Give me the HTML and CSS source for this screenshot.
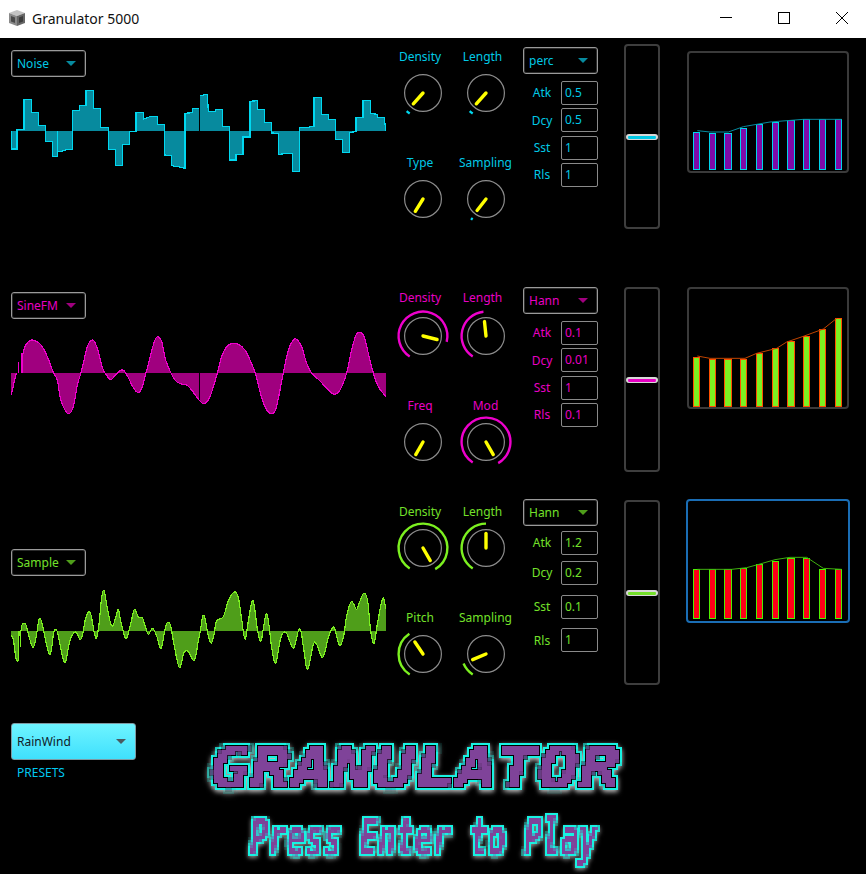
FILE: index.html
```html
<!DOCTYPE html>
<html lang="en">
<head>
    <meta charset="UTF-8">
    <title>Granulator 5000</title>
    <link rel="stylesheet" href="styles.css">
</head>
<body>
    <div class="titlebar">
        <svg class="app-icon" width="18" height="18" viewBox="0 0 18 18">
            <polygon points="9,1 17,4 9,7 1,4" fill="#c4c4c4"/>
            <polygon points="1,4 9,7 9,17 1,14" fill="#8a8a8a"/>
            <polygon points="17,4 9,7 9,17 17,14" fill="#666"/>
            <polygon points="3,7 7,8.5 7,14 3,12.5" fill="#4a4a4a"/>
            <polygon points="15,7 11,8.5 11,14 15,12.5" fill="#3c3c3c"/>
        </svg>
        <span class="app-title">Granulator 5000</span>
        <div class="win-controls">
            <div class="win-btn"><svg width="14" height="14" viewBox="0 0 14 14"><path d="M1 6.5H13" stroke="#000" fill="none"/></svg></div>
            <div class="win-btn"><svg width="14" height="14" viewBox="0 0 14 14"><rect x="1.5" y="1.5" width="11" height="11" stroke="#000" fill="none"/></svg></div>
            <div class="win-btn"><svg width="14" height="14" viewBox="0 0 14 14"><path d="M1 1L13 13M13 1L1 13" stroke="#000" fill="none"/></svg></div>
        </div>
    </div>

    <!-- noise voice -->
    <div class="synth synth-noise">
        <div class="osc">
            <div class="dropdown"><span>Noise</span><i class="arrow"></i></div>
            <svg class="wave" data-wave="noise" viewBox="33 255 1125 270"></svg>
        </div>
        <div class="knobs">
            <div class="knob-cell"><div class="knob-label">Density</div><svg class="knob" data-angle="-138" data-arc="1"></svg></div>
            <div class="knob-cell"><div class="knob-label">Length</div><svg class="knob" data-angle="-138" data-arc="1"></svg></div>
            <div class="knob-cell"><div class="knob-label">Type</div><svg class="knob" data-angle="-148"></svg></div>
            <div class="knob-cell"><div class="knob-label">Sampling</div><svg class="knob" data-angle="-142" data-arc="1"></svg></div>
        </div>
        <div class="env">
            <div class="dropdown"><span>perc</span><i class="arrow"></i></div>
            <div class="env-row"><label>Atk</label><div class="field">0.5</div></div>
            <div class="env-row"><label>Dcy</label><div class="field">0.5</div></div>
            <div class="env-row"><label>Sst</label><div class="field">1</div></div>
            <div class="env-row"><label>Rls</label><div class="field">1</div></div>
        </div>
        <div class="fader"><div class="fader-thumb"></div></div>
        <div class="graph"><svg data-graph="noise" viewBox="237 159 474 354"></svg></div>
    </div>

    <!-- sine fm voice -->
    <div class="synth synth-fm">
        <div class="osc">
            <div class="dropdown"><span>SineFM</span><i class="arrow"></i></div>
            <svg class="wave" data-wave="fm" viewBox="33 126 1125 270"></svg>
        </div>
        <div class="knobs">
            <div class="knob-cell"><div class="knob-label">Density</div><svg class="knob" data-angle="104" data-arc="1"></svg></div>
            <div class="knob-cell"><div class="knob-label">Length</div><svg class="knob" data-angle="-6" data-arc="1"></svg></div>
            <div class="knob-cell"><div class="knob-label">Freq</div><svg class="knob" data-angle="-150"></svg></div>
            <div class="knob-cell"><div class="knob-label">Mod</div><svg class="knob" data-angle="150" data-arc="1"></svg></div>
        </div>
        <div class="env">
            <div class="dropdown"><span>Hann</span><i class="arrow"></i></div>
            <div class="env-row"><label>Atk</label><div class="field">0.1</div></div>
            <div class="env-row"><label>Dcy</label><div class="field">0.01</div></div>
            <div class="env-row"><label>Sst</label><div class="field">1</div></div>
            <div class="env-row"><label>Rls</label><div class="field">0.1</div></div>
        </div>
        <div class="fader"><div class="fader-thumb"></div></div>
        <div class="graph"><svg data-graph="fm" viewBox="237 27 474 354"></svg></div>
    </div>

    <!-- sample voice -->
    <div class="synth synth-sample">
        <div class="osc">
            <div class="dropdown"><span>Sample</span><i class="arrow"></i></div>
            <svg class="wave" data-wave="sample" viewBox="33 129 1125 270"></svg>
        </div>
        <div class="knobs">
            <div class="knob-cell"><div class="knob-label">Density</div><svg class="knob" data-angle="150" data-arc="1"></svg></div>
            <div class="knob-cell"><div class="knob-label">Length</div><svg class="knob" data-angle="0" data-arc="1"></svg></div>
            <div class="knob-cell"><div class="knob-label">Pitch</div><svg class="knob" data-angle="-34" data-arc="1"></svg></div>
            <div class="knob-cell"><div class="knob-label">Sampling</div><svg class="knob" data-angle="-113" data-arc="1"></svg></div>
        </div>
        <div class="env">
            <div class="dropdown"><span>Hann</span><i class="arrow"></i></div>
            <div class="env-row"><label>Atk</label><div class="field">1.2</div></div>
            <div class="env-row"><label>Dcy</label><div class="field">0.2</div></div>
            <div class="env-row"><label>Sst</label><div class="field">0.1</div></div>
            <div class="env-row"><label>Rls</label><div class="field">1</div></div>
        </div>
        <div class="fader"><div class="fader-thumb"></div></div>
        <div class="graph graph-active"><svg data-graph="sample" viewBox="234 33 480 360"></svg></div>
    </div>

    <div class="footer">
        <div class="presets">
            <div class="preset-box"><span>RainWind</span><i class="arrow"></i></div>
            <div class="preset-label">PRESETS</div>
        </div>
        <svg class="logo" width="450" height="144" viewBox="0 0 450 144">
            <defs>
                <!-- the logo letters are sampled on a grid so they come out blocky -->
                <filter id="pixelBig" color-interpolation-filters="sRGB" filterUnits="userSpaceOnUse" x="0" y="0" width="450" height="80">
                    <feFlood x="2" y="2" width="1" height="1"/>
                    <feComposite width="4" height="4"/>
                    <feTile result="grid"/>
                    <feComposite in="SourceAlpha" in2="grid" operator="in"/>
                    <feMorphology operator="dilate" radius="2" result="px"/>
                    <feFlood flood-color="#7f4399"/>
                    <feComposite in2="px" operator="in" result="body"/>
                    <feMorphology in="px" operator="dilate" radius="1" result="gap"/>
                    <feMorphology in="px" operator="dilate" radius="3" result="edge"/>
                    <feFlood flood-color="#18f2e2"/>
                    <feComposite in2="edge" operator="in" result="cyan"/>
                    <feGaussianBlur in="edge" stdDeviation="2.6"/>
                    <feOffset dy="2" result="blur"/>
                    <feFlood flood-color="#c4c4c4"/>
                    <feComposite in2="blur" operator="in" result="halo"/>
                    <feMerge>
                        <feMergeNode in="halo"/>
                        <feMergeNode in="cyan"/>
                        <feMergeNode in="gap"/>
                        <feMergeNode in="body"/>
                    </feMerge>
                </filter>
                <filter id="pixelSmall" color-interpolation-filters="sRGB" filterUnits="userSpaceOnUse" x="0" y="70" width="450" height="74">
                    <feFlood x="1" y="71" width="1" height="1"/>
                    <feComposite y="70" width="3" height="3"/>
                    <feTile result="grid"/>
                    <feComposite in="SourceAlpha" in2="grid" operator="in"/>
                    <feMorphology operator="dilate" radius="1" result="px"/>
                    <feFlood flood-color="#7f4399"/>
                    <feComposite in2="px" operator="in" result="body"/>
                    <feMorphology in="px" operator="dilate" radius="2" result="edge"/>
                    <feFlood flood-color="#18f2e2"/>
                    <feComposite in2="edge" operator="in" result="cyan"/>
                    <feGaussianBlur in="edge" stdDeviation="2"/>
                    <feOffset dy="2" result="blur"/>
                    <feFlood flood-color="#8c8c8c"/>
                    <feComposite in2="blur" operator="in" result="halo"/>
                    <feMerge>
                        <feMergeNode in="halo"/>
                        <feMergeNode in="cyan"/>
                        <feMergeNode in="body"/>
                    </feMerge>
                </filter>
            </defs>
            <g filter="url(#pixelBig)">
                <text class="logo-big" transform="translate(19 58) scale(1.22 1)">GRANULATOR</text>
            </g>
            <g filter="url(#pixelSmall)">
                <text class="logo-small" transform="translate(60 125) scale(0.595 1)">Press Enter to Play</text>
            </g>
        </svg>
    </div>

    <script src="script.js"></script>
</body>
</html>
```

FILE: styles.css
```css
* {
    box-sizing: border-box;
}

html, body {
    margin: 0;
    padding: 0;
    height: 874px;
    overflow: hidden;
    background-color: #000;
    font-family: "Noto Sans", Arial, sans-serif;
    font-size: 12px;
}

.titlebar {
    display: flex;
    align-items: center;
    height: 38px;
    padding-left: 8px;
    padding-bottom: 2px;
    background-color: #fff;
}

.app-icon {
    margin-right: 6px;
}

.app-title {
    color: #111;
    font-size: 14px;
}

.win-controls {
    display: flex;
    gap: 12px;
    margin-left: auto;
    padding-right: 1px;
}

.win-btn {
    display: flex;
    align-items: center;
    justify-content: center;
    width: 46px;
    height: 36px;
}

/* one voice: oscillator, knobs, envelope, fader, graph */
.synth {
    display: grid;
    grid-template-columns: 379px 133px 101px 62px 164px;
    padding-left: 11px;
    color: var(--accent);
}

.synth-noise {
    --accent: #00c9e6;
    --dim: #078a9e;
    --line: #00d8f0;
    height: 243px;
}

.synth-fm {
    --accent: #e800c4;
    --dim: #a0007f;
    --line: #ee00cc;
    height: 213px;
}

.synth-sample {
    --accent: #74e02a;
    --dim: #4f9e1a;
    --line: #7cf020;
    height: 221px;
}

.osc {
    padding-top: 12px;
}

.synth-fm .osc {
    padding-top: 11px;
}

.synth-sample .osc {
    padding-top: 55px;
}

.dropdown {
    display: flex;
    align-items: center;
    justify-content: space-between;
    width: 75px;
    height: 27px;
    padding: 0 9px 0 5px;
    border: 1px solid #9a9a9a;
    border-radius: 3px;
    box-shadow: inset 0 0 0 1px #2c2c2c;
    color: var(--accent);
}

.arrow {
    width: 0;
    height: 0;
    border-left: 5px solid transparent;
    border-right: 5px solid transparent;
    border-top: 5px solid var(--dim);
}

.wave {
    display: block;
    width: 375px;
    height: 90px;
    margin-top: 8px;
}

.wave path {
    shape-rendering: crispEdges;
}

.knobs {
    display: grid;
    grid-template-columns: 66px 59px;
    align-content: start;
    row-gap: 32px;
    padding-top: 11px;
}

.synth-fm .knobs {
    padding-top: 9px;
}

.synth-sample .knobs {
    padding-top: 10px;
}

.knob-cell {
    display: flex;
    flex-direction: column;
    align-items: center;
}

.knob-label {
    height: 16px;
    line-height: 16px;
    white-space: nowrap;
}

.knob-cell:nth-child(odd) .knob-label,
.knob-cell:nth-child(2) .knob-label {
    margin-right: 6px;
}

.knob {
    display: block;
    flex: none;
    width: 60px;
    height: 60px;
    margin-top: -2px;
}

.synth-fm .knob-cell:nth-child(-n+2) .knob {
    margin-top: 0;
}

.env {
    display: flex;
    flex-direction: column;
    gap: 3.3px;
    padding-top: 9px;
}

.synth-fm .env {
    padding-top: 6px;
}

.synth-sample .env {
    padding-top: 5px;
}

.env .dropdown {
    margin-bottom: 3.7px;
}

.env-row {
    display: flex;
    align-items: center;
    width: 75px;
    height: 24px;
}

.env-row label {
    width: 38px;
    text-align: center;
}

.field {
    width: 37px;
    height: 24px;
    padding-left: 3px;
    line-height: 22px;
    border: 1px solid #8a8a8a;
    border-radius: 2px;
}

/* the sample voice has uneven spacing in its envelope column */
.synth-sample .env .dropdown {
    margin-bottom: 1.7px;
}

.synth-sample .env-row:nth-child(3) {
    margin-top: 2.7px;
}

.synth-sample .env-row:nth-child(4) {
    margin-top: 6.7px;
}

.synth-sample .env-row:nth-child(5) {
    margin-top: 6px;
}

.fader {
    width: 36px;
    height: 185px;
    margin-top: 6px;
    border: 2px solid #3e3e3e;
    border-radius: 4px;
}

.fader-thumb {
    height: 6px;
    margin-top: 88px;
    background-color: var(--accent);
    border: 2px solid #d8d8d8;
    border-bottom-width: 1px;
    border-radius: 3px;
}

.graph {
    width: 162px;
    height: 122px;
    margin-left: 1px;
    border: 2px solid #3a3a3a;
    border-radius: 4px;
}

.graph svg {
    display: block;
    width: 100%;
    height: 100%;
}

.graph rect {
    shape-rendering: crispEdges;
}

.synth-noise .graph {
    margin-top: 13px;
}

.synth-fm .graph {
    margin-top: 6px;
}

.graph-active {
    width: 164px;
    height: 124px;
    margin-top: 5px;
    margin-left: 0;
    border-color: #1a6db4;
}

.footer {
    display: flex;
    height: 159px;
    padding-left: 11px;
    --dim: #4a5a60;
}

.presets {
    width: 125px;
    padding-top: 8px;
}

.preset-box {
    display: flex;
    align-items: center;
    justify-content: space-between;
    height: 37px;
    padding: 0 9px 0 5px;
    border: 1px solid #7d9aa3;
    border-radius: 3px;
    background: linear-gradient(#6ef4ff, #3fe0fd);
    color: #102028;
}

.preset-label {
    margin-top: 4px;
    padding-left: 6px;
    color: #00c8f0;
}

.logo {
    display: block;
    margin-top: 15px;
    margin-left: 54px;
}

.logo text {
    font-family: "DejaVu Sans Mono", monospace;
    font-weight: bold;
    font-style: oblique;
}

.logo-big {
    font-size: 56px;
}

.logo-small {
    font-size: 51px;
}
```

FILE: script.js
```js
// all coordinates below are in 1/3 px units, same as the svg viewBoxes
var NS = "http://www.w3.org/2000/svg";

var WAVES = {
    noise: {
        base: 392,
        smooth: false,
        parts: [[[33,392],[33,447],[51,447],[51,392]],
            [[51,392],[51,388],[72,388],[72,298],[95,298],[95,337],[116,337],[116,376],[136,376],[136,424],[157,424],[157,468],[172,470],[172,455],[195,452],[197,448],[217,448],[217,332],[238,332],[238,316],[258,316],[258,271],[281,271],[281,325],[302,325],[302,382],[325,382],[325,449],[347,449],[347,497],[367,497],[367,434],[388,434],[388,396],[408,394],[408,337],[431,337],[431,357],[450,350],[472,350],[472,374],[493,374],[493,465],[514,467],[514,497],[535,500],[555,505],[555,340],[577,338],[577,325],[597,325]],
            [[601,287],[622,283],[625,335],[646,335],[646,328],[667,328],[667,380],[688,380],[688,480],[708,480],[708,464],[729,464],[729,411],[750,411],[750,304],[772,302],[772,328],[793,328],[793,367],[814,367],[814,399],[835,400],[835,463],[856,461],[877,461],[877,514],[898,514],[898,383],[921,382],[942,379],[942,292],[964,292],[964,343],[985,343],[985,358],[1006,358],[1006,418],[1027,418],[1027,458],[1048,458],[1048,397],[1068,395],[1068,352],[1089,352],[1089,301],[1111,301],[1111,340],[1132,343],[1132,352],[1153,352],[1153,372],[1158,372],[1158,392]]],
        marks: [[172, 392, 470]],
        cuts: []
    },
    fm: {
        base: 264,
        smooth: true,
        parts: [[[33,330],[38,312],[44,285],[49,264]],
            [[68,264],[68,212],[75,185],[85,170],[95,165],[105,167],[118,175],[130,190],[145,222],[160,262],[172,285],[180,335],[190,365],[205,386],[220,365],[232,300],[243,264],[250,235],[262,185],[272,168],[282,168],[295,200],[308,250],[318,268],[332,284],[345,272],[360,257],[372,257],[385,278],[400,308],[414,323],[425,310],[438,264],[452,210],[463,170],[473,155],[485,170],[497,225],[512,262],[525,285],[540,296],[560,300],[575,315],[597,345],[612,356],[630,335],[652,264],[665,215],[680,185],[695,176],[715,178],[735,195],[750,225],[765,262],[780,320],[795,365],[812,386],[828,370],[850,264],[865,195],[880,165],[890,163],[905,185],[920,235],[935,264],[960,288],[985,315],[1003,328],[1020,315],[1040,264],[1055,195],[1068,150],[1080,142],[1092,155],[1105,205],[1120,264],[1135,305],[1158,335]]],
        marks: [[54, 232, 264], [63, 203, 264]],
        cuts: [[598, 264, 345]]
    },
    sample: {
        base: 270,
        smooth: true,
        parts: [[[33,282],[40,295],[48,352],[55,352],[57,270]],
            [[63,270],[65,255],[70,247],[78,252],[88,290],[99,320],[108,290],[115,245],[120,232],[127,250],[135,290],[148,340],[155,320],[162,272],[172,272],[185,335],[196,365],[207,310],[215,285],[228,273],[240,295],[248,280],[255,240],[265,213],[273,222],[282,270],[289,292],[297,250],[305,170],[312,148],[320,190],[330,240],[338,255],[347,230],[355,205],[362,240],[372,280],[380,292],[392,250],[403,205],[415,228],[427,230],[437,260],[445,280],[458,262],[470,285],[483,323],[495,265],[503,244],[512,255],[522,310],[538,380],[552,335],[565,332],[583,358],[595,300],[601,270],[608,226],[615,232],[625,285],[634,307],[642,280],[650,240],[670,227],[685,180],[703,153],[715,170],[725,235],[735,295],[745,240],[757,178],[765,210],[773,270],[783,300],[792,250],[800,217],[808,260],[815,320],[827,367],[840,300],[848,277],[860,277],[880,322],[895,270],[903,270],[912,330],[923,385],[940,310],[950,310],[968,349],[985,290],[997,260],[1005,265],[1018,312],[1030,290],[1040,225],[1052,185],[1060,187],[1070,205],[1080,180],[1092,157],[1103,180],[1112,270],[1122,307],[1132,250],[1148,172],[1158,205]]],
        marks: [[61, 270, 318]],
        cuts: []
    }
};

var BAR_X = [[250,269],[298,317],[343,365],[391,410],[439,458],[487,506],[532,554],[580,599],[628,647],[676,695]];

var GRAPHS = {
    noise: {
        bottom: 509, fill: "#7f0aa8", edge: "#00d4ec", line: "#078a9e",
        tops: [397,400,400,385,373,367,361,358,358,358],
        env: "262,392 300,396 355,396 400,380 480,366 580,358 695,358"
    },
    fm: {
        bottom: 380, fill: "#7cf020", edge: "#ff5000", line: "#c04400",
        tops: [232,236,236,236,220,205,184,169,148,115],
        env: "262,228 300,235 405,235 440,220 500,205 530,186 580,169 640,147 680,115"
    },
    sample: {
        bottom: 386, fill: "#ff0018", edge: "#4ef000", line: "#3fae10",
        tops: [238,238,238,235,223,214,205,205,238,238],
        env: "262,238 365,238 410,233 450,222 495,209 540,202 590,202 640,235 695,238"
    }
};

function el(parent, name, attrs) {
    var node = document.createElementNS(NS, name);
    for (var key in attrs) {
        node.setAttribute(key, attrs[key]);
    }
    parent.appendChild(node);
    return node;
}

// catmull-rom through the points
function curve(points, smooth) {
    var d = "M" + points[0][0] + " " + points[0][1];
    for (var i = 0; i < points.length - 1; i++) {
        var p1 = points[i];
        var p2 = points[i + 1];
        if (!smooth) {
            d += "L" + p2[0] + " " + p2[1];
            continue;
        }
        var p0 = points[i - 1] || p1;
        var p3 = points[i + 2] || p2;
        d += "C" + (p1[0] + (p2[0] - p0[0]) / 6) + " " + (p1[1] + (p2[1] - p0[1]) / 6) +
             " " + (p2[0] - (p3[0] - p1[0]) / 6) + " " + (p2[1] - (p3[1] - p1[1]) / 6) +
             " " + p2[0] + " " + p2[1];
    }
    return d;
}

document.querySelectorAll("[data-wave]").forEach(function(svg) {
    var wave = WAVES[svg.dataset.wave];
    var style = getComputedStyle(svg);
    var dim = style.getPropertyValue("--dim");
    var line = style.getPropertyValue("--line");

    wave.parts.forEach(function(points) {
        var d = curve(points, wave.smooth);
        var first = points[0];
        var last = points[points.length - 1];
        var closed = d + "L" + last[0] + " " + wave.base + "L" + first[0] + " " + wave.base + "Z";
        el(svg, "path", { d: closed, fill: dim });
        el(svg, "path", { d: d, fill: "none", stroke: line, "stroke-width": 3.6 });
    });
    wave.marks.forEach(function(m) {
        el(svg, "path", { d: "M" + m[0] + " " + m[1] + "V" + m[2], stroke: line, "stroke-width": 3 });
    });
    wave.cuts.forEach(function(m) {
        el(svg, "path", { d: "M" + m[0] + " " + m[1] + "V" + m[2], stroke: "#000", "stroke-width": 3 });
    });
});

function polar(angle, radius) {
    var rad = angle * Math.PI / 180;
    return [30 + radius * Math.sin(rad), 30 - radius * Math.cos(rad)];
}

document.querySelectorAll(".knob").forEach(function(svg) {
    var angle = Number(svg.dataset.angle);
    var accent = getComputedStyle(svg).getPropertyValue("--line");
    svg.setAttribute("viewBox", "0 0 60 60");

    el(svg, "circle", { cx: 30, cy: 30, r: 18.4, fill: "none", stroke: "#8c8c8c", "stroke-width": 1.2 });
    if (svg.dataset.arc) {
        var from = polar(-147, 24.4);
        var to = polar(angle, 24.4);
        var large = angle + 147 > 180 ? 1 : 0;
        el(svg, "path", {
            d: "M" + from[0] + " " + from[1] + "A24.4 24.4 0 " + large + " 1 " + to[0] + " " + to[1],
            fill: "none", stroke: accent, "stroke-width": 2.4
        });
    }
    var tip = polar(angle, 14.5);
    el(svg, "line", {
        x1: 30, y1: 30, x2: tip[0], y2: tip[1],
        stroke: "#ffff00", "stroke-width": 3.4, "stroke-linecap": "round"
    });
});

// snap to whole pixels so the 1px bar outlines stay crisp
function snap(v) {
    return Math.round(v / 3) * 3;
}

document.querySelectorAll("[data-graph]").forEach(function(svg) {
    var g = GRAPHS[svg.dataset.graph];
    BAR_X.forEach(function(x, i) {
        var left = snap(x[0]);
        var top = snap(g.tops[i]);
        el(svg, "rect", {
            x: left + 1.5, y: top + 1.5,
            width: snap(x[1]) - left - 3, height: snap(g.bottom) - top - 3,
            fill: g.fill, stroke: g.edge, "stroke-width": 3
        });
    });
    el(svg, "polyline", { points: g.env, fill: "none", stroke: g.line, "stroke-width": 3 });
});
```
